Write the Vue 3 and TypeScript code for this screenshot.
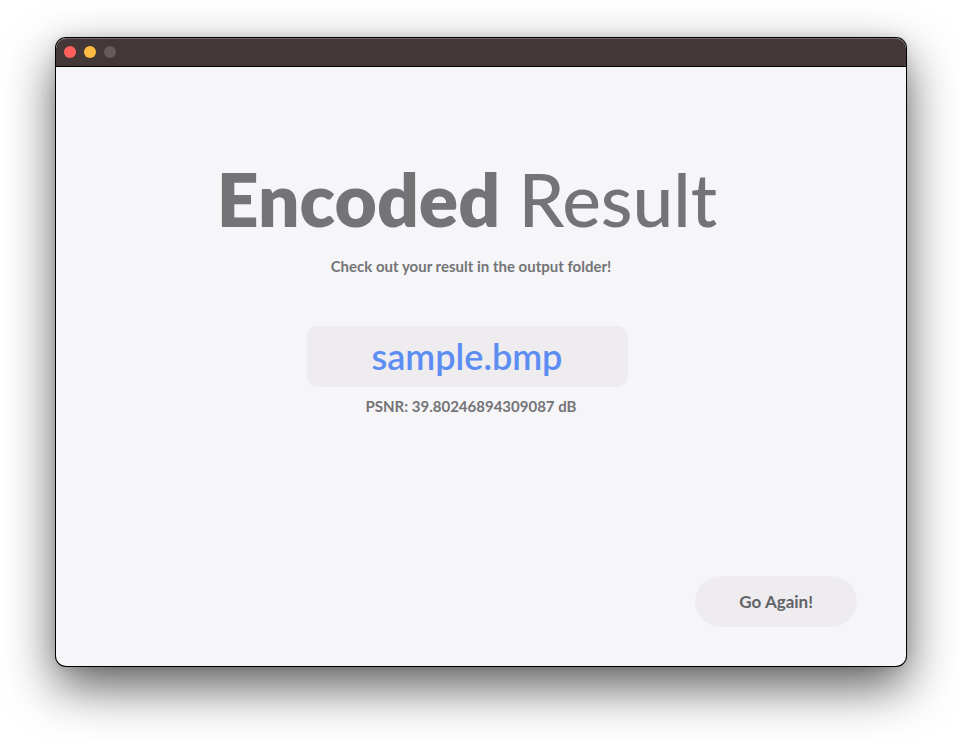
<script setup lang="ts">
import { ref } from 'vue'

const fileName = ref<string>('sample.bmp')
const psnr = ref<string>('39.80246894309087')
</script>

<template>
  <div class="desktop">
    <section class="window">
      <header class="titlebar">
        <button class="light close" type="button" aria-label="Close"></button>
        <button class="light minimize" type="button" aria-label="Minimize"></button>
        <button class="light zoom" type="button" aria-label="Zoom" disabled></button>
      </header>
      <main class="content">
        <div class="result">
          <h1><strong>Encoded</strong> <span>Result</span></h1>
          <p class="hint">Check out your result in the output folder!</p>
          <div class="file">{{ fileName }}</div>
          <p class="psnr">PSNR: {{ psnr }} dB</p>
        </div>
        <button class="again" type="button">Go Again!</button>
      </main>
    </section>
  </div>
</template>

<style>
body {
  background: #ffffff;
}
</style>

<style scoped>
.desktop {
  box-sizing: border-box;
  min-height: 100vh;
  padding: 38px 56px 74px;
  display: flex;
  overflow: hidden;
  font-family: Lato, "Liberation Sans", sans-serif;
  color: #747477;
}
.window {
  flex: 1;
  display: flex;
  flex-direction: column;
  overflow: hidden;
  border-radius: 10px;
  background: #f6f6f8;
  box-shadow: 0 0 0 1px #000000, 0 20px 50px rgba(0, 0, 0, 0.65), 0 0 12px rgba(0, 0, 0, 0.12);
}
.titlebar {
  box-sizing: border-box;
  height: 29px;
  padding: 0 8px;
  display: flex;
  align-items: center;
  gap: 8px;
  border-radius: 10px 10px 0 0;
  background: #443737;
  border-bottom: 1px solid #000000;
  box-shadow: inset 0 1px 0 #756a6a;
}
.light {
  width: 12px;
  height: 12px;
  padding: 0;
  border: 0;
  border-radius: 50%;
}
.close {
  background: #ff5f5c;
}
.minimize {
  background: #ffbc40;
}
.zoom {
  background: #655a5c;
}
.content {
  flex: 1;
  display: flex;
  flex-direction: column;
  justify-content: space-between;
  padding: 88px 49px 39px;
}
.result {
  display: flex;
  flex-direction: column;
  align-items: center;
  padding-right: 28px;
}
h1 {
  margin: 0;
  font-size: 73px;
  line-height: 88px;
  font-weight: 500;
}
h1 strong {
  font-weight: 800;
}
p {
  margin: 0;
  padding-left: 8px;
  font-size: 15px;
  line-height: 20px;
  font-weight: 700;
}
.hint {
  margin-top: 13px;
}
.file {
  margin-top: 50px;
  width: 321px;
  border-radius: 10px;
  background: #efecef;
  color: #5b8df2;
  font-size: 36px;
  line-height: 61px;
  font-weight: 600;
  text-align: center;
}
.psnr {
  margin-top: 9px;
}
.again {
  align-self: flex-end;
  height: 51px;
  padding: 0 44px;
  border: 0;
  border-radius: 26px;
  background: #efecef;
  color: #606367;
  font: inherit;
  font-size: 17px;
  font-weight: 700;
}
</style>
